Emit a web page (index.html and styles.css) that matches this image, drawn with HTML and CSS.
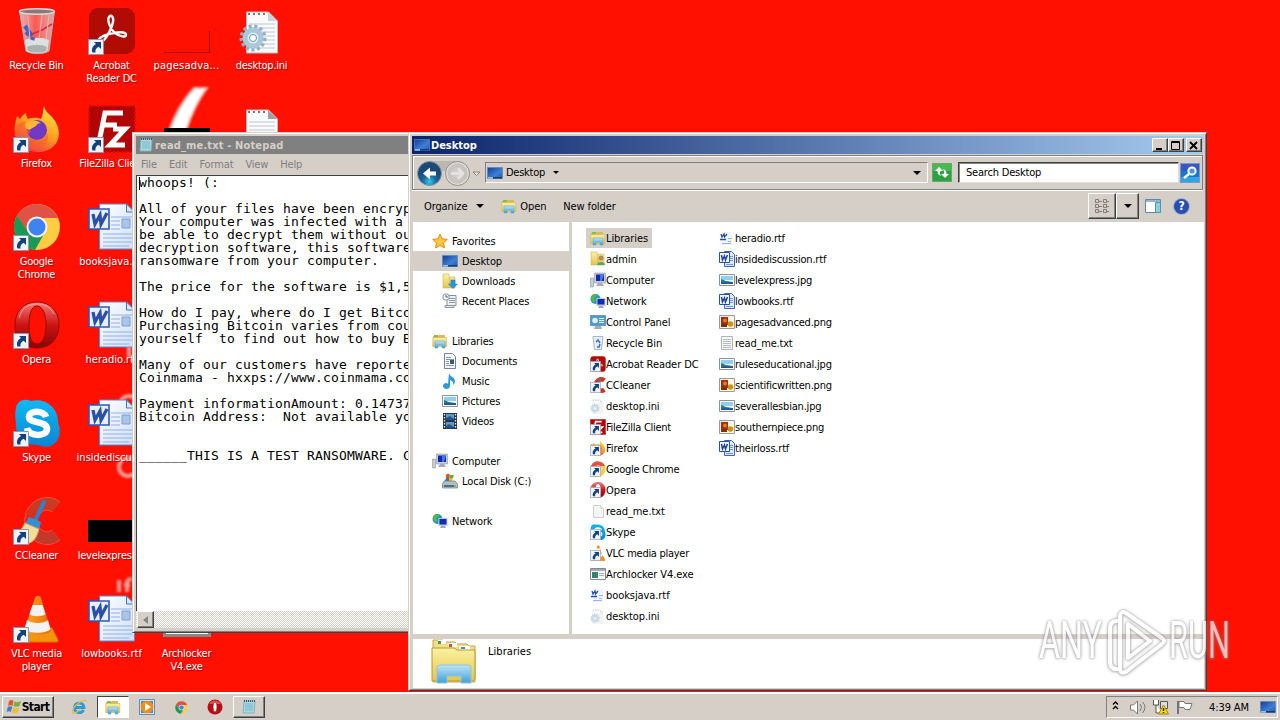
FILE: index.html
```html
<!DOCTYPE html>
<html lang="en">
<head>
<meta charset="utf-8">
<title>Desktop</title>
<link rel="stylesheet" href="styles.css">
</head>
<body>
<svg class="sprite" width="0" height="0" aria-hidden="true">
  <defs>
    <linearGradient id="gFold" x2="0" y2="1"><stop stop-color="#fcf2a0"/><stop offset="1" stop-color="#e3c54c"/></linearGradient>
    <linearGradient id="gBlue" x2="0" y2="1"><stop stop-color="#bfe4f8"/><stop offset="1" stop-color="#3f9fd8"/></linearGradient>
    <linearGradient id="gScr" x2="1" y2="1"><stop stop-color="#123c94"/><stop offset=".6" stop-color="#3f7fd6"/><stop offset="1" stop-color="#2255ae"/></linearGradient>
    <linearGradient id="gOp" x2="0" y2="1"><stop stop-color="#f47a78"/><stop offset=".5" stop-color="#cc1414"/><stop offset="1" stop-color="#840505"/></linearGradient>
    <linearGradient id="gFf" x1=".8" x2=".2" y2="1"><stop stop-color="#ffe83c"/><stop offset=".5" stop-color="#ff9a20"/><stop offset="1" stop-color="#f0244c"/></linearGradient>
    <linearGradient id="gSky" x2="0" y2="1"><stop stop-color="#10b8f4"/><stop offset="1" stop-color="#0a86d4"/></linearGradient>
    <linearGradient id="gPap" x2="1" y2="1"><stop stop-color="#fff"/><stop offset="1" stop-color="#cfdffa"/></linearGradient>
    <linearGradient id="gBin" x2="1"><stop stop-color="#d8d0d4" stop-opacity=".85"/><stop offset=".45" stop-color="#f0e4e6" stop-opacity=".35"/><stop offset="1" stop-color="#d0d0d4" stop-opacity=".8"/></linearGradient>
    <linearGradient id="gCone" x2="1"><stop stop-color="#ffa830"/><stop offset="1" stop-color="#e86a00"/></linearGradient>
    <linearGradient id="gCc" x2="0" y2="1"><stop stop-color="#c83c22"/><stop offset=".5" stop-color="#e0281a"/><stop offset="1" stop-color="#c03a2c"/></linearGradient>
    <radialGradient id="gBack" cy=".85"><stop stop-color="#35c8ec"/><stop offset=".55" stop-color="#176a9e"/><stop offset="1" stop-color="#1c4a74"/></radialGradient>
    <radialGradient id="gFwd"><stop stop-color="#d8d4cf"/><stop offset=".75" stop-color="#c4c0bb"/><stop offset="1" stop-color="#efeeec"/></radialGradient>
  </defs>

  <symbol id="shortcut" viewBox="0 0 16 16"><path fill="#eef2fa" stroke="#8c96ac" d="M.5.5h15v15H.5z"/><path fill="#12417c" d="M6 3h7v7l-2.300-2.300C8 9 7 11 7.500 13.500H4.500C3 10 5 6.500 8 5z"/></symbol>
  <symbol id="recycle" viewBox="0 0 48 48"><path fill="url(#gBin)" stroke="#b9b4b8" d="M6.500 4h35l-5.500 40c-5 3.500-18 3.500-23 0z"/><path fill="#dbe0e0" d="M12 33c6-3 18-3 24 0l-1.500 11c-5 3-16 3-21 0z"/><path fill="#aab3b2" d="M14 40c6-3 14-3 20 0l-1 4c-5 2-13 2-18 0z"/><ellipse cx="24" cy="4.500" rx="17.500" ry="2.700" fill="#8c7779" stroke="#d9d6d6" stroke-width="1.500"/><path fill="none" stroke="#3d62c4" stroke-width="4.500" d="M12 19l3 4M13 28l3-3 3 4M20 30l-1 3"/><path fill="none" stroke="#e0283c" stroke-width="1.500" d="M19 27l10-4 10-6"/><path fill="none" stroke="#efb4b8" d="M29 8l-3 24M36 8l-3 25M15 9l2 24"/></symbol>
  <symbol id="acrobat" viewBox="0 0 48 48"><rect x="1" y="1" width="46" height="46" rx="9" fill="#b00c04"/><path fill="none" stroke="#fff" stroke-width="2.400" stroke-linejoin="round" d="M11 34c-1-4 8-7 15-8 8-1.500 12-.5 12 2s-6 2-11-2c-5-4-8-13-6-16s5 0 4 5c-1 6-6 15-9 18s-5 3-5 1z"/></symbol>
  <symbol id="firefox" viewBox="0 0 48 48"><path fill="url(#gFf)" d="M31 1c1 5 4 7 8 11 10 11 9 26-2 32C22 52 5 44 2 30 .5 21 3 16 4 11c1 1 2 2 3 3 2-3 4-5 6-6 0 3 1 4 2 6 6-2 10-1 13 0 2-4 2-8 3-13z"/><circle cx="24" cy="25" r="10" fill="#7138c4"/><path fill="#ffb534" d="M12 19c4-4 10-5 16-1-3 0-4 1-5 3l-7 4c-2-1-4-3-4-6z"/><path fill="#f5602b" d="M2 25c2-6 6-9 11-8-2 3-2 6 1 8 5 0 5 1 1 4-1 8 14 11 19 0 5 11-10 20-21 13-4-4-7-9-11-17z" opacity=".55"/></symbol>
  <symbol id="chrome" viewBox="0 0 48 48"><circle cx="24" cy="24" r="23" fill="#ffcd42"/><path fill="#de5345" d="M4 12.500A23 23 0 0 1 45 15H24l-10 14z"/><path fill="#189a56" d="M4 12.500 15 29l16 2-9 16A23 23 0 0 1 4 12.500z"/><circle cx="24" cy="24" r="10.500" fill="#f3f3f3"/><circle cx="24" cy="24" r="8.500" fill="#3f82f2"/></symbol>
  <symbol id="opera" viewBox="0 0 48 48"><path fill="url(#gOp)" fill-rule="evenodd" stroke="#9c0808" d="M24 1c14 0 22 10 22 23s-8 23-22 23S2 37 2 24 10 1 24 1zM24 5c-6 0-8 9-8 19s2 19 8 19 9-9 9-19-3-19-9-19z"/><path fill="none" stroke="#ffb4ae" opacity=".7" d="M6 17C9 5 18 3 24 3s13 2 17 10"/></symbol>
  <symbol id="skype" viewBox="0 0 48 48"><path fill="url(#gSky)" d="M3 9C4 2 11-1 18 2c14-4 28 7 27 22 4 9 1 20-8 23-4 1-8 1-11-1C12 47 2 38 3 24c-1-5-1-10 0-15z"/><path fill="none" stroke="#fff" stroke-width="6.500" d="M33 18c-2-7-17-7-17 0 0 7 18 3 18 12 0 8-18 8-20-1"/></symbol>
  <symbol id="ccleaner" viewBox="0 0 48 48"><path fill="none" stroke="#ef5548" stroke-width="13.500" d="M43 10C33 2 18 10 18 24s15 22 25 14"/><path fill="none" stroke="url(#gCc)" stroke-width="12" d="M43 10C33 2 18 10 18 24s15 22 25 14"/><path stroke="#2684d0" stroke-width="4" stroke-linecap="round" d="M31 5 22 24"/><path fill="#3490d2" d="m16 20 12 5-2 8-14-6z"/><path fill="#f2dc9e" stroke="#cfa95e" d="m12 26 14 6c-2 8-5 13-12 15C8 43 3 40 0 39c6-3 9-7 12-13z"/></symbol>
  <symbol id="vlc" viewBox="0 0 48 48"><path fill="#f4930e" stroke="#df7300" d="M10 33h29l6 12c0 2-1 2-2 2H6c-1 0-2 0-2-2z"/><path fill="url(#gCone)" d="M22 3c1-3 5-3 6 0l10 33c-4 5-22 5-27 0z"/><path fill="#f2f2f0" d="m19.500 10-3 9c3 3 13 3 16 0l-3-9zM14 25l-2.500 9c4 5 22 5 26 0L35 25c-4 4-17 4-21 0z"/></symbol>
  <symbol id="filezilla" viewBox="0 0 48 48"><path fill="#b20508" d="M1 1h46v46H1z"/><path fill="none" stroke="#d20d0d" stroke-width="2" stroke-dasharray="2 2" d="M1 1h46v46H1z"/><path fill="none" stroke="#fff" stroke-width="5" d="M35 8H17l-6 29M14 20h15M25 24h12L22 40h15"/></symbol>
  <symbol id="wordrtf" viewBox="0 0 48 48"><path fill="url(#gPap)" stroke="#5c88d0" d="M11.500 1h27l8 8v37h-35z"/><path fill="#d9e7fb" stroke="#4474c0" d="M38.500 1v8h8z"/><path stroke="#8fb0e4" stroke-width="1.100" d="M23 14h21M23 18h9M23 22h9M23 26h9M15 31h29M15 35h29M15 39h29M15 43h26"/><path fill="#abc5ea" stroke="#7c9fd2" d="M34 16h8v9h-8z"/><path fill="#e8f0fc" stroke="#2c59b4" stroke-width="1.600" d="M1 6h20v20H1z"/><path fill="none" stroke="#2a50a8" stroke-width="3.300" d="m5 11 2 10 5-9 1 9 6-11"/></symbol>
  <symbol id="wordsmall" viewBox="0 0 16 16"><path fill="#dce9fb" stroke="#3a66b8" d="M5.500.5h7l3 3v12h-10z"/><path stroke="#6f98d8" d="M11 5.500h3M11 7.500h3M11 9.500h3M7 13.500h7"/><path fill="#f2f6fd" stroke="#2450a8" d="M.5 1.500h10v10H.5z"/><path fill="none" stroke="#1f459c" stroke-width="1.500" d="m2.500 4 1 5 2-4 1 4 2-5"/></symbol>
  <symbol id="inifile" viewBox="0 0 48 48"><path fill="#fafafa" stroke="#b6bcc0" d="M8.500 5h22l9 9v32h-31z"/><path stroke="#b8c8d4" d="M11 17h26M11 21h26M11 25h26M11 29h26M11 33h26M11 37h26M11 41h26"/><path stroke="#777" stroke-dasharray="2 3" stroke-width="2" d="M10 7h20"/><path fill="#cbd2d6" d="M30 5v9h9z"/><circle cx="15" cy="31" r="11.500" fill="none" stroke="#8fb2c8" stroke-width="4" stroke-dasharray="3 2.500"/><circle cx="15" cy="31" r="8" fill="#dfecf3" stroke="#a9c8d8" stroke-width="5"/><circle cx="15" cy="31" r="3.500" fill="#fff" stroke="#6d96b0"/></symbol>
  <symbol id="notes" viewBox="0 0 48 48"><path fill="#fafafa" stroke="#b6bcc0" d="M8.500 5h22l9 9v32h-31z"/><path stroke="#b8c8d4" d="M11 17h26M11 21h26M11 25h26M11 29h26M11 33h26M11 37h26M11 41h26"/><path stroke="#777" stroke-dasharray="2 3" stroke-width="2" d="M10 7h20"/><path fill="#9aa0a4" d="M30 5v9h9z"/></symbol>
  <symbol id="txtfile" viewBox="0 0 16 16"><path fill="#f6f7f7" stroke="#b0b4b5" d="M2.500 1.500h11v13h-11z"/><path stroke="#b7bdc0" d="M4 4.500h8M4 6.500h8M4 8.500h8M4 10.500h8M4 12.500h8"/></symbol>
  <symbol id="blank" viewBox="0 0 16 16"><path fill="#f4f5f5" stroke="#cbcdce" d="M3.500 2.500h7l3 3v9h-10z"/><path fill="#d6dadd" d="M10 3v3h3z"/></symbol>
  <symbol id="smallrtf" viewBox="0 0 16 16"><path fill="#f0f5fc" d="M4 2h9v13H3z"/><path stroke="#94b6e2" d="M9 8.500h4M9 11.500h3M3 13.500h9"/><path fill="none" stroke="#214fae" stroke-width="1.300" d="m2 4 1 3 2-3 .5 3L8 4M1 9.500h6"/></symbol>
  <symbol id="libs" viewBox="0 0 16 16"><path fill="#d8bb58" d="M1 3h5l1-1h6v5H1z"/><path fill="url(#gFold)" stroke="#cbb05c" stroke-width=".6" d="M.8 4.500h14v9H.8z"/><path fill="#87b956" d="M2 2h4v2H2z"/><path fill="url(#gBlue)" stroke="#4ba3d5" stroke-width=".5" d="M3 8h10v7h-3v-3H6v3H3z"/></symbol>
  <symbol id="biglibs" viewBox="0 0 48 48"><path fill="#f1df88" stroke="#c3a54a" d="M3 8V1h10l2 2h10l2 2h10l2 2h6v36H3z"/><path fill="#fff" d="M8 1h8v4H8zM18 4h9v4h-9zM29 7h11v4H29z"/><path fill="#4c9458" d="M8 2h3v3H8z"/><path fill="#d55035" d="M19 5h3v3h-3z"/><path fill="#4b8cb9" d="M31 8h4v2h-4z"/><path fill="url(#gFold)" stroke="#b99838" d="M2 9h22l3 2h18v29l-2 2H2z"/><path fill="url(#gBlue)" stroke="#86c6e8" d="M7 30c0-3 1-4 4-4h26c3 0 4 1 4 4v14H31v-7H17v7H7z"/></symbol>
  <symbol id="monitor" viewBox="0 0 16 16"><path fill="url(#gScr)" stroke="#5f86b8" stroke-width=".7" d="M.5 2.500h15v11H.5z"/><path stroke="#89c6ea" stroke-width="1.500" d="M1 12.800h5"/><path stroke="#163a73" stroke-width="1.500" d="M6 12.800h9"/></symbol>
  <symbol id="user" viewBox="0 0 16 16"><path fill="url(#gFold)" stroke="#ceb15b" stroke-width=".6" d="M1 1h6l1 13H1zM8 3h6v11H8z"/><circle cx="11" cy="7" r="2.500" fill="#b58a5f"/><path fill="#5ba46d" d="M7 14c0-4 8-4 8 0z"/></symbol>
  <symbol id="down" viewBox="0 0 16 16"><path fill="url(#gFold)" stroke="#ceb15b" stroke-width=".6" d="M1 1h6l1 14H1zM8 4h5v11H8z"/><path fill="#2a97dc" stroke="#1c75b8" stroke-width=".5" d="M9 7h4v4h2.500L11 15.500 6.500 11H9z"/></symbol>
  <symbol id="recent" viewBox="0 0 16 16"><path fill="#edf0f2" stroke="#8a9298" d="M5 2.500h9v10H5z"/><path stroke="#8d9ba5" d="M7 5.500h6M7 7.500h6M7 9.500h6"/><path fill="#dfe3e6" stroke="#929a9f" d="M3 12.500h9v2H3z"/><circle cx="4" cy="4" r="3.200" fill="#f4f7f8" stroke="#8a979f"/><path fill="none" stroke="#567" d="M4 2v2h2"/></symbol>
  <symbol id="star" viewBox="0 0 16 16"><path fill="#ffc740" stroke="#e08a18" d="m8 1 2.200 4.800 5.100.6-3.800 3.500 1 5L8 12.400 3.500 15l1-5.100L.7 6.400l5.200-.6z"/></symbol>
  <symbol id="computer" viewBox="0 0 16 16"><path fill="#c8ced2" stroke="#8d9499" stroke-width=".6" d="M.5 6h3v9h-3z"/><path fill="#c3ccd8" stroke="#8d9bac" stroke-width=".6" d="M4.500 1h11v10h-11z"/><path fill="#1228b0" d="M6 2.500h8V9H6z"/><path fill="#4976e0" d="M10 2.500h4L12 9h-2z"/><path fill="#a6aeb5" d="M8 11h4l2 3H6z"/></symbol>
  <symbol id="network" viewBox="0 0 16 16"><circle cx="5.500" cy="6" r="5" fill="#2693cd"/><path fill="#55b944" d="M2 2c3-2 6-1 5 1L4 5l2 3-3 1L1 6z"/><path fill="#bdc9d8" d="M6.500 5h9v8h-9z"/><path fill="#102bb4" d="M7.500 6h7v5.500h-7z"/><path fill="#9eabb7" d="M9 13h4l1 2H8z"/></symbol>
  <symbol id="control" viewBox="0 0 16 16"><path fill="#4a9bd5" stroke="#6d96b5" d="M.5 1.500h15v10H.5z"/><circle cx="5" cy="6.500" r="2.800" fill="#dceffa"/><path stroke="#e6f5ff" d="M9 4.500h5M9 6.500h5M9 8.500h5"/><path fill="#9fb0bc" d="M5 12h6l1 3H4z"/></symbol>
  <symbol id="smallbin" viewBox="0 0 16 16"><path fill="#e7eef3" stroke="#a9b8c3" d="M3 1.500h10l-1.500 13h-7z"/><path fill="none" stroke="#3970cf" stroke-width="1.500" d="m6 7 2-2 2 3M10 9l-1 3H7"/></symbol>
  <symbol id="docs" viewBox="0 0 16 16"><path fill="#f3f7fa" stroke="#778390" d="M2.500.5h8l3 3v12h-11z"/><path stroke="#8799a8" d="M4 4.500h5M4 6.500h8M4 8.500h3M4 10.500h3M4 12.500h8"/><path fill="#3c5878" d="M8 7h4v4H8z"/></symbol>
  <symbol id="music" viewBox="0 0 16 16"><path fill="#2d98dd" d="M7 0c1 4 6 4 6 8 0 2-1 3-2 4 1-4-2-4-3-5v6c0 4-7 4-7 0 0-3 4-4 5-2z"/></symbol>
  <symbol id="picture" viewBox="0 0 16 16"><path fill="#fff" stroke="#8a9299" d="M.5 2.500h15v11H.5z"/><path fill="#8ed0ee" d="M2 4h12v4H2z"/><path fill="#1e7d85" d="m2 7 5 2 7 1v2H2z"/><path fill="#2d4f94" d="M2 10.500h12V12H2z"/></symbol>
  <symbol id="pngpic" viewBox="0 0 16 16"><path fill="#fff5e4" stroke="#9a9a96" d="M.5 1.500h15v13H.5z"/><path fill="#a32d10" d="M2 3h7v8H2z"/><circle cx="6" cy="6.500" r="2" fill="#e67b1e"/><circle cx="11.500" cy="10" r="2.800" fill="#d2920f"/><path fill="#74330e" d="M2 10h6v3H2z"/></symbol>
  <symbol id="video" viewBox="0 0 16 16"><path fill="#28333d" d="M1 0h14v16H1z"/><path fill="#599bc8" d="M4 1h8v6H4zM4 9h8v6H4z"/><path fill="#24548c" d="M4 5l4-2 4 3v1H4zM4 13l3-2 5 3v1H4z"/><path stroke="#e7edf0" stroke-width="1.300" stroke-dasharray="1.500 1.500" d="M2.500 1v14M13.500 1v14"/></symbol>
  <symbol id="disk" viewBox="0 0 16 16"><path fill="#e25325" d="M4 2c2-2 3-1 4 0L7 5H4z"/><path fill="#71ab2d" d="M8 2h4l-1 3H7z"/><path fill="#2d77c8" d="M4 5h3v3H3z"/><path fill="#efba28" d="M7 5h4l-1 3H7z"/><path fill="#b4bdc1" stroke="#6b7981" stroke-width=".7" d="M2 8h11l2.500 3v4H.5v-4z"/><path stroke="#48718c" stroke-width="2" d="M2 13h10"/><path stroke="#59d546" stroke-width="2" d="M12 13h2"/></symbol>
  <symbol id="exe" viewBox="0 0 16 16"><path fill="#fafafa" stroke="#85898b" d="M.5 2.500h15v11H.5z"/><path fill="#a4abb2" d="M1 3h14v2H1z"/><path fill="#37816e" d="M2 6h6v6H2z"/><path stroke="#aaa" d="M9 7.500h5M9 9.500h5"/></symbol>
  <symbol id="notepad" viewBox="0 0 16 16"><path fill="#a6dbe6" stroke="#7fb4be" d="M3 2h11l-1 12H2z"/><path stroke="#6199a8" stroke-width=".6" d="M4 5h8M4 7h8M4 9h8M4 11h8"/><path stroke="#375e69" stroke-width="2" stroke-dasharray="1 1" d="M3 2h11"/></symbol>
  <symbol id="flag4" viewBox="0 0 16 16"><path fill="#e1582c" d="M3 2c2-1.500 3-1 4.500 0l-1 5C5 6 3.500 6 2 7z"/><path fill="#74b13a" d="M8.500 2.500C11 4 12.500 3 15 2l-1.500 5c-2 1-4 1-6 0z"/><path fill="#3582d1" d="M1.800 8c2-1 3-1 4.500 0l-1.500 5C3.500 12 2 12 .5 13z"/><path fill="#f5bd2b" d="M7.200 8.500c2 1 4 1 6 0l-1.500 5c-2 1-4 1-6 0z"/></symbol>
  <symbol id="ie" viewBox="0 0 16 16"><path fill="none" stroke="#2d9ade" stroke-width="2.800" d="M4 8.500h9C12.500 3 4 2.500 3.500 8.500c0 6 7 6.500 9 2.500"/><path fill="none" stroke="#e9bc3c" stroke-width="1.100" d="M15 2c-1-3-15 5-13.500 12 3 1 6-2 8-4"/></symbol>
  <symbol id="wmp" viewBox="0 0 16 16"><path fill="#d2e5f3" stroke="#5f8fb9" d="M.5.5h15v15H.5z"/><path fill="#3f8fc9" d="M2 2h12v12H2z"/><circle cx="8" cy="8" r="6.300" fill="#f68c13"/><path fill="#fff" d="m6 4 6 4-6 4z"/></symbol>
  <symbol id="operasmall" viewBox="0 0 16 16"><circle cx="8" cy="8" r="7.500" fill="#b80e14"/><path fill="#e8484a" d="M2 5a7 7 0 0 1 12 0z"/><ellipse cx="8" cy="8" rx="2" ry="5" fill="#fff" stroke="#7c0508" stroke-width=".6"/></symbol>
</svg>

<main class="desktop">
  <div class="wall-art">
    <svg width="300" height="640" viewBox="0 0 300 640">
      <path class="slash" d="M194 88h13q-13 18-21 43h-17q9-26 25-43z"/>
      <g class="wisps"><circle cx="129" cy="405" r="9"/><circle cx="128" cy="467" r="9"/><path d="M119 580v12M127 592v-9q0-4 5-4M124 585h6M129 345v12"/></g>
    </svg>
  </div>
  <div class="icons">
    <div class="ico"><svg class="big"><use href="#recycle"/></svg><span>Recycle Bin</span></div>
    <div class="ico"><svg class="big"><use href="#firefox"/></svg><svg class="arrow"><use href="#shortcut"/></svg><span>Firefox</span></div>
    <div class="ico"><svg class="big"><use href="#chrome"/></svg><svg class="arrow"><use href="#shortcut"/></svg><span>Google Chrome</span></div>
    <div class="ico"><svg class="big"><use href="#opera"/></svg><svg class="arrow"><use href="#shortcut"/></svg><span>Opera</span></div>
    <div class="ico"><svg class="big"><use href="#skype"/></svg><svg class="arrow"><use href="#shortcut"/></svg><span>Skype</span></div>
    <div class="ico"><svg class="big"><use href="#ccleaner"/></svg><svg class="arrow"><use href="#shortcut"/></svg><span>CCleaner</span></div>
    <div class="ico"><svg class="big"><use href="#vlc"/></svg><svg class="arrow"><use href="#shortcut"/></svg><span>VLC media player</span></div>

    <div class="ico"><svg class="big"><use href="#acrobat"/></svg><svg class="arrow"><use href="#shortcut"/></svg><span>Acrobat Reader DC</span></div>
    <div class="ico"><svg class="big"><use href="#filezilla"/></svg><svg class="arrow"><use href="#shortcut"/></svg><span class="one">FileZilla Clie...</span></div>
    <div class="ico"><svg class="big"><use href="#wordrtf"/></svg><span class="one wide">booksjava.rtf</span></div>
    <div class="ico"><svg class="big"><use href="#wordrtf"/></svg><span class="one wide">heradio.rtf</span></div>
    <div class="ico"><svg class="big"><use href="#wordrtf"/></svg><span class="one wide">insidediscus...</span></div>
    <div class="ico"><i class="black-thumb"></i><span class="one">levelexpress...</span></div>
    <div class="ico"><svg class="big"><use href="#wordrtf"/></svg><span class="one wide">lowbooks.rtf</span></div>

    <div class="ico"><i class="red-thumb"></i><span class="one wider">pagesadva...</span></div>
    <div class="ico"><i class="dark-thumb"></i></div>
    <div class="ico"></div><div class="ico"></div><div class="ico"></div><div class="ico"></div>
    <div class="ico"><svg class="big"><use href="#exe"/></svg><span>Archlocker V4.exe</span></div>

    <div class="ico"><svg class="big"><use href="#inifile"/></svg><span class="one">desktop.ini</span></div>
    <div class="ico"><svg class="big"><use href="#notes"/></svg></div>
  </div>

  <section class="win notepad">
    <header class="title inactive"><svg class="i16"><use href="#notepad"/></svg><b>read_me.txt - Notepad</b></header>
    <nav class="menu"><span>File</span><span>Edit</span><span>Format</span><span>View</span><span>Help</span></nav>
    <div class="editor"><pre>whoops! (:

All of your files have been encryp
Your computer was infected with a
be able to decrypt them without ou
decryption software, this software
ransomware from your computer.

The price for the software is $1,5

How do I pay, where do I get Bitco
Purchasing Bitcoin varies from cou
yourself  to find out how to buy B

Many of our customers have reporte
Coinmama - hxxps://www.coinmama.co

Payment informationAmount: 0.14737
Bitcoin Address:  Not available yo


______THIS IS A TEST RANSOMWARE. C</pre><i class="caret"></i></div>
    <div class="hscroll"><i class="sbtn"><svg width="5" height="8"><path fill="#858585" d="M5 0v8L0 4z"/></svg></i></div>
  </section>

  <section class="win explorer">
    <header class="title"><svg class="i16"><use href="#monitor"/></svg><b>Desktop</b>
      <div class="controls"><i><svg width="12" height="11"><path fill="#000" d="M2 8h6v2H2z"/></svg></i><i><svg width="12" height="11"><path fill="none" stroke="#000" d="M1.500 1.500h8v8h-8zM1 2.500h9"/></svg></i><i class="close"><svg width="12" height="11"><path stroke="#000" stroke-width="1.800" d="m2 2 7 7M9 2 2 9"/></svg></i></div>
    </header>
    <div class="addressbar">
      <svg class="nav" width="70" height="30"><path fill="#bcb7b1" d="M14 3h30v10H14z"/><circle cx="14.500" cy="15.500" r="12" fill="url(#gBack)" stroke="#7a98ac"/><path fill="#fff" d="m8 15.500 7-6v4h6v4h-6v4z"/><circle cx="42.500" cy="15.500" r="12" fill="url(#gFwd)" stroke="#8e8b88"/><path fill="none" stroke="#e6e4e2" stroke-width="2.500" d="M36 15.500h12M43 10.500l5 5-5 5"/><path fill="#eee" stroke="#85817d" d="M58 14h7l-3.500 3.500z"/></svg>
      <div class="path"><svg class="i16"><use href="#monitor"/></svg><span>Desktop</span><i class="tri small"></i><i class="tri end"></i></div>
      <svg class="refresh" width="20" height="19"><rect x=".5" y=".5" width="19" height="18" fill="#2da044" stroke="#68a86d"/><path fill="#56cc55" d="M1 1h18v7H1z" opacity=".6"/><path fill="#fff" d="M7 4 3 8h2.500c0 3 1 4 3.500 5-1-2-1.500-3-.5-5H11zM13 15l4-4h-2.500c0-3-1-4-3.500-5 1 2 1.500 3 .5 5H9z"/></svg>
      <div class="search">Search Desktop</div>
      <svg class="find" width="20" height="20"><rect x=".5" y=".5" width="19" height="19" fill="#1976cf" stroke="#7796d2"/><path fill="#3858c0" d="M1 1h18v7H1z"/><path fill="#31a5e4" d="M1 14h18v5H1z"/><circle cx="12" cy="8" r="3.600" fill="#4e91dd" stroke="#fff" stroke-width="2"/><path stroke="#fff" stroke-width="2.500" d="m9 11-5 4"/></svg>
    </div>
    <div class="toolbar">
      <span>Organize</span><i class="tri"></i><svg class="i16"><use href="#libs"/></svg><span class="open">Open</span><span class="newf">New folder</span>
      <div class="view"><i><svg width="16" height="14"><path fill="none" stroke="#817d79" d="M1.500.5h3v3h-3zM1.500 5.500h3v3h-3zM1.500 10.500h3v3h-3zM9.500.5h3v3h-3zM9.500 5.500h3v3h-3zM9.500 10.500h3v3h-3zM5 2.500h3M5 7.500h3M5 12.500h3M13 2.500h2M13 7.500h2M13 12.500h2"/></svg></i><i class="drop"><b class="tri"></b></i></div>
      <svg class="pane" width="16" height="14"><path fill="#fff" stroke="#5e89a8" d="M.5.5h15v13H.5z"/><path fill="#8fd0e0" stroke="#5098b0" d="M10.500 3.500h5v10h-5z"/><path fill="#96b6ce" d="M1 1h14v2H1z"/></svg>
      <div class="help">?</div>
    </div>
    <div class="panes">
      <aside class="tree">
        <div class="root"><svg class="i16"><use href="#star"/></svg>Favorites</div>
        <div class="sel"><svg class="i16"><use href="#monitor"/></svg>Desktop</div>
        <div><svg class="i16"><use href="#down"/></svg>Downloads</div>
        <div><svg class="i16"><use href="#recent"/></svg>Recent Places</div>
        <div class="root gap"><svg class="i16"><use href="#libs"/></svg>Libraries</div>
        <div><svg class="i16"><use href="#docs"/></svg>Documents</div>
        <div><svg class="i16"><use href="#music"/></svg>Music</div>
        <div><svg class="i16"><use href="#picture"/></svg>Pictures</div>
        <div><svg class="i16"><use href="#video"/></svg>Videos</div>
        <div class="root gap"><svg class="i16"><use href="#computer"/></svg>Computer</div>
        <div><svg class="i16"><use href="#disk"/></svg>Local Disk (C:)</div>
        <div class="root gap"><svg class="i16"><use href="#network"/></svg>Network</div>
      </aside>
      <div class="files">
        <ul class="first">
          <li class="sel"><svg class="i16"><use href="#libs"/></svg>Libraries</li>
          <li><svg class="i16"><use href="#user"/></svg>admin</li>
          <li><svg class="i16"><use href="#computer"/></svg>Computer</li>
          <li><svg class="i16"><use href="#network"/></svg>Network</li>
          <li><svg class="i16"><use href="#control"/></svg>Control Panel</li>
          <li><svg class="i16"><use href="#smallbin"/></svg>Recycle Bin</li>
          <li><svg class="i16"><use href="#acrobat"/><use href="#shortcut" y="5" width="11" height="11"/></svg>Acrobat Reader DC</li>
          <li><svg class="i16"><use href="#ccleaner"/><use href="#shortcut" y="5" width="11" height="11"/></svg>CCleaner</li>
          <li><svg class="i16 faded"><use href="#inifile"/></svg>desktop.ini</li>
          <li class="tight"><svg class="i16"><use href="#filezilla"/><use href="#shortcut" y="5" width="11" height="11"/></svg>FileZilla Client</li>
          <li><svg class="i16"><use href="#firefox"/><use href="#shortcut" y="5" width="11" height="11"/></svg>Firefox</li>
          <li class="tight"><svg class="i16"><use href="#chrome"/><use href="#shortcut" y="5" width="11" height="11"/></svg>Google Chrome</li>
          <li><svg class="i16"><use href="#opera"/><use href="#shortcut" y="5" width="11" height="11"/></svg>Opera</li>
          <li><svg class="i16"><use href="#blank"/></svg>read_me.txt</li>
          <li><svg class="i16"><use href="#skype"/><use href="#shortcut" y="5" width="11" height="11"/></svg>Skype</li>
          <li class="tight"><svg class="i16"><use href="#vlc"/><use href="#shortcut" y="5" width="11" height="11"/></svg>VLC media player</li>
          <li><svg class="i16"><use href="#exe"/></svg>Archlocker V4.exe</li>
          <li><svg class="i16"><use href="#smallrtf"/></svg>booksjava.rtf</li>
          <li><svg class="i16 faded"><use href="#inifile"/></svg>desktop.ini</li>
        </ul>
        <ul>
          <li><svg class="i16"><use href="#smallrtf"/></svg>heradio.rtf</li>
          <li><svg class="i16"><use href="#wordsmall"/></svg>insidediscussion.rtf</li>
          <li><svg class="i16"><use href="#picture"/></svg>levelexpress.jpg</li>
          <li><svg class="i16"><use href="#wordsmall"/></svg>lowbooks.rtf</li>
          <li><svg class="i16"><use href="#pngpic"/></svg>pagesadvanced.png</li>
          <li><svg class="i16"><use href="#txtfile"/></svg>read_me.txt</li>
          <li><svg class="i16"><use href="#picture"/></svg>ruleseducational.jpg</li>
          <li><svg class="i16"><use href="#pngpic"/></svg>scientificwritten.png</li>
          <li><svg class="i16"><use href="#picture"/></svg>severallesbian.jpg</li>
          <li><svg class="i16"><use href="#pngpic"/></svg>southernpiece.png</li>
          <li><svg class="i16"><use href="#wordsmall"/></svg>theirloss.rtf</li>
        </ul>
      </div>
    </div>
    <footer class="details"><svg width="48" height="48"><use href="#biglibs"/></svg><span>Libraries</span></footer>
  </section>

  <svg class="watermark" width="200" height="70" viewBox="0 0 200 70">
    <g><text x="4" y="52" textLength="63" lengthAdjust="spacingAndGlyphs">ANY</text><text x="134" y="52" textLength="61" lengthAdjust="spacingAndGlyphs">RUN</text>
    <path d="M83 15q-8-1-8 8v32q0 9 8 8M91 7q-5-3-6 3v53q1 6 7 2l35-27q4-3 0-6zM93 18v34l22-17z"/></g>
  </svg>
</main>

<footer class="taskbar">
  <button class="start"><svg class="i16"><use href="#flag4"/></svg>Start</button>
  <span class="task"><svg class="i16"><use href="#ie"/></svg></span>
  <span class="task pressed"><svg class="i16"><use href="#libs"/></svg></span>
  <span class="task"><svg class="i16"><use href="#wmp"/></svg></span>
  <span class="task"><svg class="i14"><use href="#chrome"/></svg></span>
  <span class="task"><svg class="i16"><use href="#operasmall"/></svg></span>
  <span class="task raised"><svg class="i16"><use href="#notepad"/></svg></span>
  <div class="tray">
    <svg width="110" height="20"><path fill="none" stroke="#000" stroke-width="1.400" d="m6 7.500 2.500-2.500L11 7.500M6 12l2.500-2.500L11 12"/><path fill="#fff" stroke="#777" d="M23.500 8h3l4-4v13l-4-4h-3z"/><path fill="none" stroke="#777" d="M33 7q3 3 0 7M35.500 5q5 5 0 11"/><path fill="#fff" stroke="#555" d="M46.500 3v5h5V3M49 8v8h6"/><path fill="#ddd" stroke="#555" d="M53.500 4.500h7v7h-7z"/><path fill="#ffd817" stroke="#9f8500" d="m56.500 8 5 9h-10z"/><path stroke="#222" stroke-width="1.400" d="M56.500 11v3M56.500 15v1"/><path stroke="#555" stroke-width="1.500" d="M71 4v13"/><path fill="#fff" stroke="#777" d="M72 4.500h5l1 2h7l-2 6h-5l-1-2h-5z"/></svg>
    <span>4:39 AM</span><svg class="i16"><use href="#monitor"/></svg>
  </div>
</footer>
</body>
</html>
```

FILE: styles.css
```css
* { box-sizing: border-box; }
body { margin: 0; width: 1280px; height: 720px; overflow: hidden; display: flex; flex-direction: column; background: #ff1000; font: 11px/13px "DejaVu Sans Condensed", "DejaVu Sans", sans-serif; font-stretch: condensed; color: #000; letter-spacing: -.25px; }
.sprite { position: absolute; }
i, b { font-style: normal; }
.i16 { width: 16px; height: 16px; flex: none; }
.i14 { width: 13px; height: 13px; }

.desktop { position: relative; height: 692px; flex: none; overflow: hidden; }
.wall-art { position: absolute; left: 0; top: 0; }
.slash { fill: #fff; stroke: #f9b4b0; stroke-width: 2; filter: blur(.8px); }
.wisps { fill: none; stroke: #ff9a94; stroke-width: 4; filter: blur(.8px); }
.icons { position: relative; display: grid; grid-auto-flow: column; grid-template-rows: repeat(7, 98px); grid-auto-columns: 75px; width: 300px; height: 686px; left: -1px; }
.ico { display: flex; position: relative; flex-direction: column; align-items: center; padding: 7px 4px 0; color: #fff; text-align: center; }
.ico span { width: 66px; margin-top: 4px; text-shadow: 1px 1px 1px #a00000; }
.ico .one { width: auto; white-space: nowrap; }
.ico .wide { letter-spacing: 0; }
.ico .wider { letter-spacing: .2px; }
.ico .big { width: 48px; height: 48px; flex: none; }
.arrow { position: absolute; left: 14px; top: 39px; width: 16px; height: 16px; }
.black-thumb { width: 48px; height: 22px; margin: 23px 0 3px; background: #000; }
.red-thumb { width: 46px; height: 22px; margin: 24px 0 2px; background: #ff1000; border-right: 1px solid #a40800; border-bottom: 1px solid #a40800; }
.dark-thumb { width: 46px; height: 8px; margin-top: 23px; background: #000; }

.win { position: absolute; display: flex; flex-direction: column; background: #d5cfc8; border: 1px solid; border-color: #d5cfc8 #404040 #404040 #d5cfc8; box-shadow: inset 1px 1px #fff, inset -1px -1px #808080; padding: 3px; }
.title { display: flex; align-items: center; height: 18px; flex: none; background: linear-gradient(90deg, #0a246a, #a6caf0); color: #fff; }
.title b { margin-left: 1px; letter-spacing: .15px; }
.inactive { background: #808080; color: #d5cfc8; }
.notepad { left: 132px; top: 132px; width: 400px; height: 501px; padding-bottom: 4px; }
.notepad .title { padding-left: 2px; }
.menu { display: flex; height: 21px; align-items: center; gap: 12px; padding-left: 5px; color: #808080; flex: none; letter-spacing: -.15px; }
.editor { position: relative; flex: 1; background: #fff; border-left: 1px solid #404040; border-top: 1px solid #404040; overflow: hidden; }
.editor pre { margin: 0; padding: 0 0 0 2px; font: 13px/13px "DejaVu Sans Mono", monospace; letter-spacing: .174px; }
.caret { position: absolute; left: 2px; top: 1px; width: 1px; height: 13px; background: #000; }
.hscroll { height: 17px; flex: none; padding-left: 1px; background: repeating-conic-gradient(#fff 0 25%, #d5cfc8 0 50%) 0 0/2px 2px; }
.sbtn, .controls i, .start, .raised, .view i { border: 1px solid; border-color: #fff #404040 #404040 #fff; box-shadow: inset -1px -1px #808080; background: #d5cfc8; display: flex; align-items: center; justify-content: center; }
.sbtn { width: 17px; height: 17px; }

.explorer { left: 408px; top: 132px; width: 799px; height: 559px; }
.explorer .title { padding-left: 2px; }
.explorer .title b { letter-spacing: -.05px; }
.controls { margin-left: auto; display: flex; padding-right: 1px; }
.controls i { width: 16px; height: 14px; }
.controls .close { margin-left: 2px; }
.addressbar { display: flex; align-items: center; height: 35px; margin-top: 1px; border: 1px solid #808080; box-shadow: inset 1px 1px #fff, 0 1px #fff; flex: none; padding: 0 1px 0 2px; }
.nav { flex: none; }
.path { display: flex; align-items: center; width: 443px; height: 21px; border: 1px solid; border-color: #808080 #fff #fff #808080; padding-left: 1px; }
.path span { margin-left: 3px; }
.tri { border: 4px solid transparent; border-top-color: #000; border-bottom: 0; width: 0; height: 0; display: block; }
.tri.small { border-width: 3px 3px 0; margin-left: 8px; }
.tri.end { margin: 0 6px 0 auto; }
.refresh { margin-left: 4px; flex: none; }
.search { width: 221px; height: 21px; margin-left: 6px; background: #fff; border: 1px solid; border-color: #404040 #ddd #ddd #404040; box-shadow: inset 1px 1px #888; padding: 3px 7px; letter-spacing: -.2px; }
.find { margin-left: 1px; flex: none; }
.toolbar { display: flex; align-items: center; height: 32px; padding-left: 12px; flex: none; }
.toolbar > .tri { margin: 0 17px 0 9px; }
.toolbar .open { margin-left: 3px; }
.newf { margin-left: 17px; }
.toolbar span { letter-spacing: -.12px; }
.view { display: flex; margin-left: auto; }
.view i { width: 28px; height: 26px; }
.view .drop { width: 23px; }
.pane { margin-left: 6px; }
.help { width: 15px; height: 15px; margin: 0 14px 0 13px; border-radius: 50%; background: #2a4dae; box-shadow: 0 0 0 1px #9caed6; color: #fff; font-weight: bold; font-size: 12px; line-height: 15px; text-align: center; }
.panes { display: flex; height: 412px; flex: none; background: #fff; margin: 0 -1px 0 1px; }
.tree { width: 159px; border-right: 3px solid #d5cfc8; padding-top: 9px; letter-spacing: -.12px; }
.tree > div { height: 20px; display: flex; align-items: center; gap: 4px; padding-left: 29px; white-space: nowrap; }
.tree > .root { padding-left: 19px; }
.tree > .gap { margin-top: 20px; }
.sel { background: #d5cfc8; }
.files { display: flex; padding: 6px 0 0 14px; }
.files ul { list-style: none; margin: 0; padding: 0; width: 129px; letter-spacing: -.2px; }
.files .first { letter-spacing: -.08px; }
.files .tight { letter-spacing: -.28px; }
.files li { height: 20px; margin-bottom: 1px; display: flex; align-items: center; padding-left: 4px; white-space: nowrap; width: max-content; padding-right: 4px; }
.faded { opacity: .65; }
.details { display: flex; border-top: 5px solid #d5cfc8; background: #fff; height: 54px; flex: none; margin: 0 -1px 0 1px; padding-left: 17px; }
.details span { margin: 6px 0 0 10px; letter-spacing: .05px; }
.watermark { position: absolute; left: 1035px; top: 606px; filter: drop-shadow(0 0 1.500px #777) drop-shadow(0 1px 1px #9998); opacity: .72; }
.watermark text { font: 400 51px Roboto, sans-serif; fill: #fff; letter-spacing: 0; }
.watermark path { fill: none; stroke: #fff; stroke-width: 4; stroke-linejoin: round; }

.taskbar { display: flex; align-items: center; height: 28px; flex: none; background: #d5cfc8; box-shadow: inset 0 2px #fff; padding: 2px 2px 0; }
.start { width: 52px; height: 22px; padding: 0 1px 0 0; margin-right: 9px; font: bold 12px "DejaVu Sans Condensed", "DejaVu Sans", sans-serif; letter-spacing: -.6px; color: #000; }
.task { display: flex; align-items: center; justify-content: center; width: 32px; height: 22px; margin-right: 2px; }
.task.pressed { background: #fff; border: 1px solid; border-color: #404040 #fff #fff #404040; }
.tray { display: flex; align-items: center; margin-left: auto; width: 172px; height: 22px; border: 1px solid; border-color: #808080 #fff #fff #808080; }
.tray svg { flex: none; }
.tray svg:first-child { width: 102px; }
.tray span { width: 51px; white-space: nowrap; letter-spacing: -.1px; }
```
